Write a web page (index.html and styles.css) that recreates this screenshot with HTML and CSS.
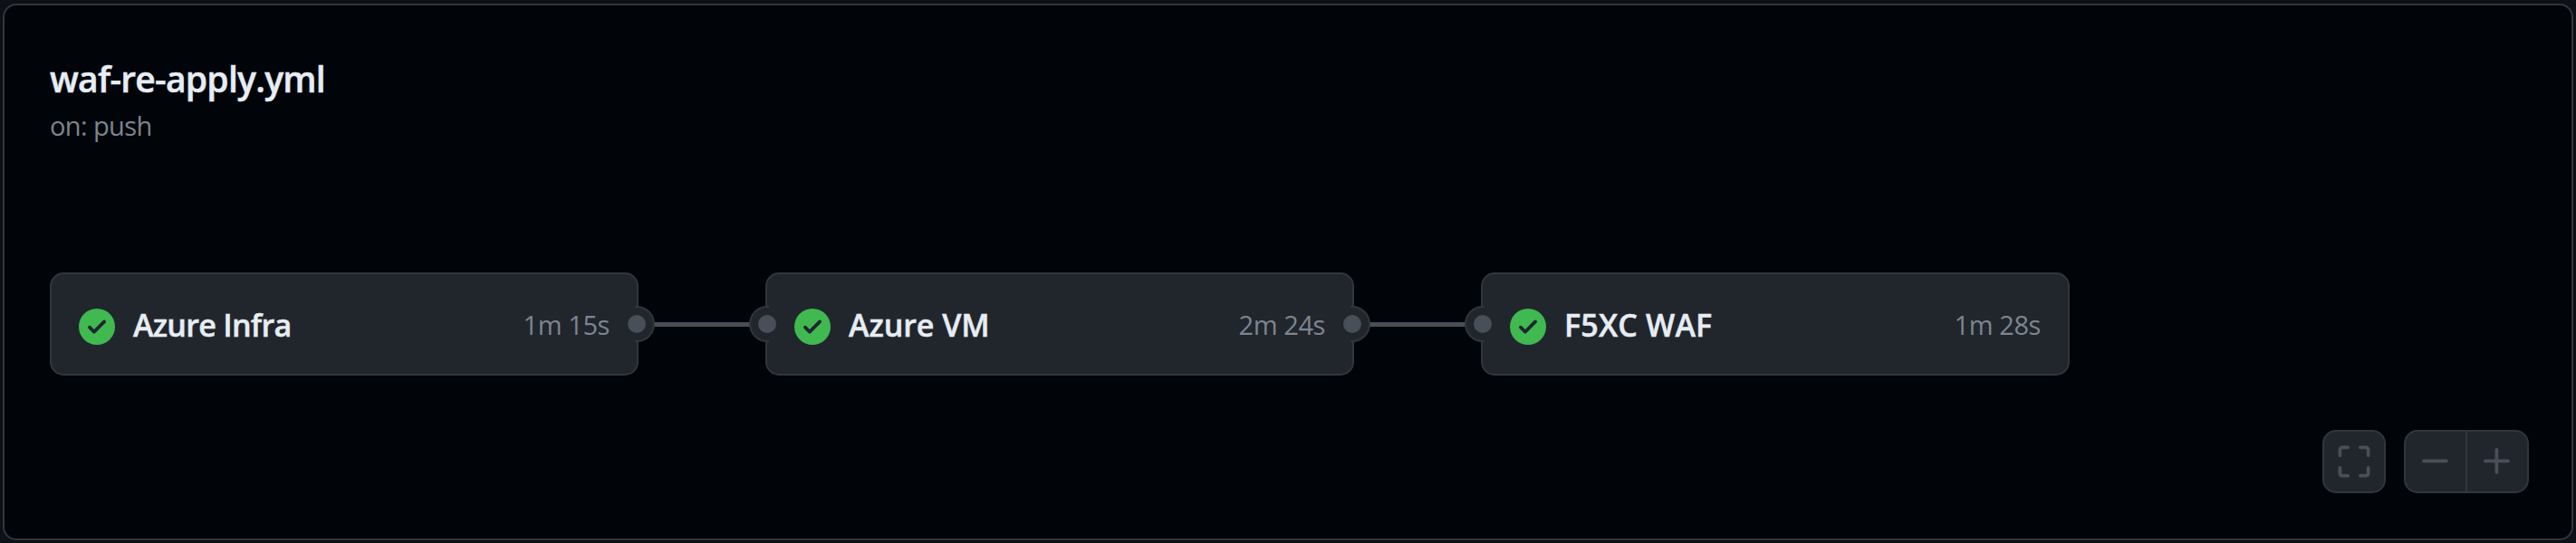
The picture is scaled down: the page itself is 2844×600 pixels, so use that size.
FILE: index.html
```html
<!DOCTYPE html>
<html lang="en">
<head>
<meta charset="utf-8">
<title>waf-re-apply.yml</title>
<link rel="stylesheet" href="styles.css">
</head>
<body>
<svg width="0" height="0" class="defs">
  <symbol id="check" viewBox="0 0 16 16"><path d="M8 16A8 8 0 1 1 8 0a8 8 0 0 1 0 16Zm3.78-9.72a.751.751 0 0 0-.018-1.042.751.751 0 0 0-1.042-.018L6.75 9.19 5.28 7.72a.751.751 0 0 0-1.042.018.751.751 0 0 0-.018 1.042l2 2a.75.75 0 0 0 1.06 0Z"/></symbol>
</svg>
<main class="panel">
  <header class="head">
    <h1 class="title"><span>waf-re-apply.yml</span></h1>
    <p class="trigger"><span>on: push</span></p>
  </header>
  <section class="graph">
    <div class="job">
      <svg class="icon ok"><use href="#check"/></svg>
      <span class="name infra">Azure Infra</span>
      <span class="time">1m 15s</span>
      <i class="port out"></i>
    </div>
    <div class="link"></div>
    <div class="job">
      <i class="port in"></i>
      <svg class="icon ok"><use href="#check"/></svg>
      <span class="name vm">Azure VM</span>
      <span class="time">2m 24s</span>
      <i class="port out"></i>
    </div>
    <div class="link"></div>
    <div class="job">
      <i class="port in"></i>
      <svg class="icon ok"><use href="#check"/></svg>
      <span class="name waf">F5XC WAF</span>
      <span class="time">1m 28s</span>
    </div>
  </section>
  <footer class="controls">
    <div class="group">
      <button class="btn" aria-label="Full screen"><svg class="icon" viewBox="0 0 16 16"><path d="M1.75 10a.75.75 0 0 1 .75.75v2.5c0 .138.112.25.25.25h2.5a.75.75 0 0 1 0 1.5h-2.5A1.75 1.75 0 0 1 1 13.25v-2.5a.75.75 0 0 1 .75-.75Zm12.5 0a.75.75 0 0 1 .75.75v2.5A1.75 1.75 0 0 1 13.25 15h-2.5a.75.75 0 0 1 0-1.5h2.5a.25.25 0 0 0 .25-.25v-2.5a.75.75 0 0 1 .75-.75ZM2.75 2.5a.25.25 0 0 0-.25.25v2.5a.75.75 0 0 1-1.5 0v-2.5C1 1.784 1.784 1 2.75 1h2.5a.75.75 0 0 1 0 1.5ZM10 1.75a.75.75 0 0 1 .75-.75h2.5c.966 0 1.75.784 1.75 1.75v2.5a.75.75 0 0 1-1.5 0v-2.5a.25.25 0 0 0-.25-.25h-2.5a.75.75 0 0 1-.75-.75Z"/></svg></button>
    </div>
    <div class="group">
      <button class="btn" aria-label="Zoom out"><svg class="icon" viewBox="0 0 16 16"><path d="M2 7.75A.75.75 0 0 1 2.75 7h10a.75.75 0 0 1 0 1.5h-10A.75.75 0 0 1 2 7.75Z"/></svg></button>
      <button class="btn" aria-label="Zoom in"><svg class="icon" viewBox="0 0 16 16"><path d="M7.75 2a.75.75 0 0 1 .75.75V7h4.25a.75.75 0 0 1 0 1.5H8.5v4.25a.75.75 0 0 1-1.5 0V8.5H2.75a.75.75 0 0 1 0-1.5H7V2.75A.75.75 0 0 1 7.75 2Z"/></svg></button>
    </div>
  </footer>
</main>
</body>
</html>
```
FILE: styles.css
```css
* { box-sizing: border-box; margin: 0; padding: 0; }
html, body { height: 600px; overflow: hidden; }
body {
  padding: 4px 3px 3px;
  background: #0d1117;
  color: #e6edf3;
  font-family: "Segoe UI", "Open Sans", "Noto Sans", sans-serif;
}
.defs { position: absolute; }
.panel {
  display: flex;
  flex-direction: column;
  height: 593px;
  padding: 50px 47px 50px 50px;
  border: 2px solid #30363d;
  border-radius: 15px;
  background: #010409;
}
.head { height: 245px; }
.title { height: 60px; font-size: 39px; line-height: 62px; font-weight: 600; letter-spacing: -0.72px; }
.trigger { height: 46px; font-size: 29px; line-height: 46px; color: #7d8590; letter-spacing: -0.6px; }
.title, .name { -webkit-text-stroke: 0.5px #e6edf3; }
.graph { display: flex; align-items: center; height: 114px; }
.job {
  position: relative;
  display: flex;
  align-items: center;
  width: 650px;
  height: 114px;
  padding: 6px 30px 0;
  border: 2px solid #30363d;
  border-radius: 15px;
  background: #21262d;
}
.icon { display: block; flex: none; width: 40px; height: 40px; fill: #484f58; }
.ok { fill: #3fb950; }
.name { margin: 0 0 4px 20px; font-size: 34px; line-height: 50px; font-weight: 600; white-space: nowrap; }
.infra { letter-spacing: -0.7px; }
.vm { letter-spacing: -0.05px; }
.waf { letter-spacing: 0.2px; }
.time { margin: 0 0 4px auto; font-size: 29px; line-height: 46px; color: #7d8590; letter-spacing: -0.4px; white-space: nowrap; }
.link { width: 140px; height: 5px; margin-top: 1px; background: #484f58; }
/* Connector ports straddle the card edge: only the outer half of the ring shows. */
.port { position: absolute; top: 35px; width: 40px; height: 40px; }
.port.out { right: -20px; }
.port.in { left: -20px; }
.port::before,
.port::after { content: ""; position: absolute; border-radius: 50%; }
.port::before { inset: 0; border: 2px solid #30363d; background: #21262d; }
.port.out::before { clip-path: inset(0 0 0 18px); }
.port.in::before { clip-path: inset(0 18px 0 0); }
.port::after { inset: 10px; background: #484f58; }
.controls { display: flex; justify-content: flex-end; gap: 20px; height: 70px; margin-top: 60px; }
.group { display: flex; height: 70px; border: 2px solid #30363d; border-radius: 15px; background: #21262d; overflow: hidden; }
.btn { display: flex; align-items: center; justify-content: center; width: 66px; height: 66px; border: 0; background: none; }
.btn + .btn { width: 68px; border-left: 2px solid #30363d; }
```
